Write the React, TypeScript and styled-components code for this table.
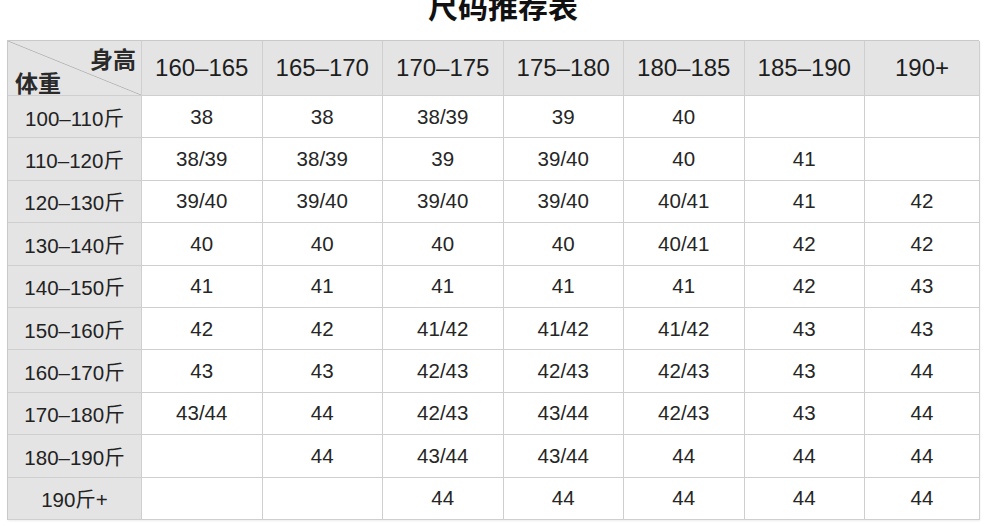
import React from "react";
import styled, { createGlobalStyle } from "styled-components";

const HEIGHTS = ["160–165", "165–170", "170–175", "175–180", "180–185", "185–190", "190+"];

const ROWS: { label: string; sizes: string[] }[] = [
  { label: "100–110斤", sizes: ["38", "38", "38/39", "39", "40", "", ""] },
  { label: "110–120斤", sizes: ["38/39", "38/39", "39", "39/40", "40", "41", ""] },
  { label: "120–130斤", sizes: ["39/40", "39/40", "39/40", "39/40", "40/41", "41", "42"] },
  { label: "130–140斤", sizes: ["40", "40", "40", "40", "40/41", "42", "42"] },
  { label: "140–150斤", sizes: ["41", "41", "41", "41", "41", "42", "43"] },
  { label: "150–160斤", sizes: ["42", "42", "41/42", "41/42", "41/42", "43", "43"] },
  { label: "160–170斤", sizes: ["43", "43", "42/43", "42/43", "42/43", "43", "44"] },
  { label: "170–180斤", sizes: ["43/44", "44", "42/43", "43/44", "42/43", "43", "44"] },
  { label: "180–190斤", sizes: ["", "44", "43/44", "43/44", "44", "44", "44"] },
  { label: "190斤+", sizes: ["", "", "44", "44", "44", "44", "44"] },
];

const GlobalStyle = createGlobalStyle`
  html, body {
    margin: 0;
    padding: 0;
    background: #ffffff;
    font-family: "Liberation Sans", "Noto Sans CJK SC", sans-serif;
    color: #222222;
    overflow: hidden;
  }
`;

export default function App() {
  return (
    <Page>
      <GlobalStyle />
      <Title>尺码推荐表</Title>
      <Table>
        <Corner>
          <CornerLabel $end>身高</CornerLabel>
          <CornerLabel>体重</CornerLabel>
        </Corner>
        {HEIGHTS.map((h) => (
          <HeadCell key={h}>{h}</HeadCell>
        ))}
        {ROWS.map((row) => (
          <React.Fragment key={row.label}>
            <RowLabel>{row.label}</RowLabel>
            {row.sizes.map((s, i) => (
              <Cell key={i}>{s}</Cell>
            ))}
          </React.Fragment>
        ))}
      </Table>
    </Page>
  );
}

/* ------------------- styled-components ------------------- */

const Page = styled.div`
  width: 990px;
  height: 526px;
  padding: 0 0 0 7px;
  box-sizing: border-box;
  display: flex;
  flex-direction: column;
  overflow: hidden;
`;

const Title = styled.h1`
  margin: -15px 0 0;
  height: 55px;
  padding-left: 20px;
  font-size: 30px;
  line-height: 40px;
  font-weight: 700;
  text-align: center;
  color: #111111;
  font-family: "Noto Sans CJK SC", sans-serif;
  width: 972px;
  box-sizing: border-box;
`;

const Table = styled.div`
  display: grid;
  grid-template-columns: 134px repeat(6, 120.5px) 115px;
  grid-template-rows: 55px repeat(10, 42.4px);
  width: 972px;
  border-top: 1px solid #c9c9c9;
  border-left: 1px solid #c9c9c9;
  box-sizing: border-box;
  box-shadow: 1px 1px 2px rgba(0, 0, 0, 0.08);
`;

const CellBase = styled.div`
  display: flex;
  align-items: center;
  justify-content: center;
  border-right: 1px solid #cfcfcf;
  border-bottom: 1px solid #cfcfcf;
  box-sizing: border-box;
  white-space: nowrap;
`;

const Corner = styled(CellBase)`
  flex-direction: column;
  align-items: stretch;
  justify-content: space-between;
  padding: 5px 5px 7px 7px;
  background:
    linear-gradient(
      to top right,
      transparent calc(50% - 0.8px),
      #b5b5b5 50%,
      transparent calc(50% + 0.8px)
    ),
    #e4e4e4;
`;

const CornerLabel = styled.span<{ $end?: boolean }>`
  align-self: ${({ $end }) => ($end ? "flex-end" : "flex-start")};
  font-family: "Noto Sans CJK SC", sans-serif;
  font-size: 23px;
  line-height: 24px;
  font-weight: 700;
  color: #2a2a2a;
`;

const HeadCell = styled(CellBase)`
  background: #e4e4e4;
  font-size: 24px;
  color: #1e1e1e;
`;

const RowLabel = styled(CellBase)`
  background: #e4e4e4;
  font-size: 20.5px;
  color: #222222;
`;

const Cell = styled(CellBase)`
  background: #ffffff;
  font-size: 20.5px;
  color: #262626;
`;
